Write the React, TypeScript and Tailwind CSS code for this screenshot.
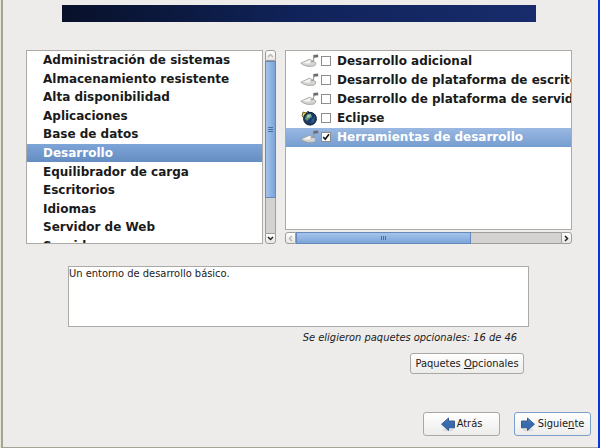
import { useState } from "react";

const categories = [
  "Administración de sistemas",
  "Almacenamiento resistente",
  "Alta disponibilidad",
  "Aplicaciones",
  "Base de datos",
  "Desarrollo",
  "Equilibrador de carga",
  "Escritorios",
  "Idiomas",
  "Servidor de Web",
  "Servidores",
];

const groups = [
  { name: "Desarrollo adicional", icon: "trowel" },
  { name: "Desarrollo de plataforma de escritorio", icon: "trowel" },
  { name: "Desarrollo de plataforma de servidor", icon: "trowel" },
  { name: "Eclipse", icon: "globe" },
  { name: "Herramientas de desarrollo", icon: "trowel" },
];

function Trowel() {
  return (
    <svg width="19" height="14" viewBox="0 0 19 14" className="shrink-0" aria-hidden="true">
      <path d="M0.8 9.2 L9.5 5.2 L15.5 8.5 Q16.5 11.5 13 12.2 L8 12.4 Q3.5 11.8 0.8 9.2Z" fill="#d4d4d2" stroke="#9a9a98" strokeWidth="0.8" />
      <path d="M2.5 9.1 L9.5 6 L13.5 8.6 L8 9.8Z" fill="#f3f3f1" />
      <path d="M10.5 8 Q13.6 8 13.6 5.5 L14 2.5" fill="none" stroke="#9b9b99" strokeWidth="1.2" />
      <path d="M13.4 2.4 L18.2 1.8" stroke="#6d6d6b" strokeWidth="2.8" />
    </svg>
  );
}

function Globe() {
  return (
    <svg width="19" height="16" viewBox="0 0 19 16" className="shrink-0" aria-hidden="true">
      <path d="M2 6 L3 2 L6 3 L8 1 L10 3 L7 6 L4 8Z" fill="#e9ce35" stroke="#4d4820" strokeWidth="0.8" />
      <circle cx="10" cy="8.7" r="6.4" fill="#1b3a68" stroke="#111c2b" />
      <path d="M6 6 Q8 3 11 4 L12 7 L9 9 L7 11 L5 9Z" fill="#5b9476" />
      <path d="M12 9 L15 7 L14 12 L11 13Z" fill="#2d5a86" />
      <path d="M7.5 4.8 L11 4.4 L10 7 L7 8Z" fill="#a5cbc8" />
    </svg>
  );
}

function Arrow({ back = false }: { back?: boolean }) {
  return (
    <svg width="14" height="15" viewBox="0 0 14 15" className={back ? "-scale-x-100" : ""} aria-hidden="true">
      <defs>
        <linearGradient id={back ? "arrow-b" : "arrow-f"} x1="0" y1="0" x2="0" y2="1">
          <stop offset="0" stopColor="#5084c0" />
          <stop offset="0.5" stopColor="#3568ab" />
          <stop offset="1" stopColor="#3a70b4" />
        </linearGradient>
      </defs>
      <ellipse cx="7" cy="13" rx="5.5" ry="1.3" fill="#000" opacity="0.08" />
      <path d="M0.5 4 H6.5 V1 L13.4 7.2 L6.5 13.5 V10.8 H0.5Z" fill={back ? "url(#arrow-b)" : "url(#arrow-f)"} stroke="#285189" strokeWidth="0.9" />
    </svg>
  );
}

function Chevron({ d, color }: { d: string; color: string }) {
  return (
    <svg width="7" height="7" viewBox="0 0 7 7" aria-hidden="true">
      <path d={d} fill="none" stroke={color} strokeWidth="1.5" />
    </svg>
  );
}

const stepper = "flex shrink-0 items-center justify-center border-[#a09e9b] bg-gradient-to-b from-white to-[#e7e6e5]";
const action = "flex items-center justify-center rounded-[3px] border bg-gradient-to-b from-white to-[#ececeb]";

export default function App() {
  const [category, setCategory] = useState("Desarrollo");
  const [selected, setSelected] = useState("Herramientas de desarrollo");
  const [checked, setChecked] = useState(["Herramientas de desarrollo"]);

  const toggle = (name: string) => {
    setSelected(name);
    setChecked((c) => (c.includes(name) ? c.filter((n) => n !== name) : [...c, name]));
  };

  return (
    <div className="flex min-h-screen border-l border-[#e8e6d6] bg-[#edeceb] font-['DejaVu_Sans_Condensed','DejaVu_Sans',sans-serif] text-[11px] leading-[14px] text-[#1a1a1a]">
      <div className="w-[2px] shrink-0 bg-[#a5a597]" />
      <main className="flex min-w-0 flex-1 flex-col border-b border-[#a5a597] pt-[5px]">
        <div className="mr-[62px] ml-[59px] h-[17px] bg-gradient-to-r from-[#08112a] via-[#10235a] to-[#182c6c]" />

        <section className="mt-7 mr-[26px] ml-[23px] flex h-[194px] font-['DejaVu_Sans',sans-serif] text-[12px] font-bold">
          <div className="min-w-0 flex-[235] overflow-hidden border border-[#acaaa7] bg-white">
            <div role="listbox" aria-label="Categorías" className="grid h-[204px] grid-rows-11">
              {categories.map((name) => (
                <button
                  key={name}
                  role="option"
                  aria-selected={name === category}
                  onClick={() => setCategory(name)}
                  className={
                    "flex min-h-0 items-center pl-4 text-left whitespace-nowrap " +
                    (name === category ? "bg-gradient-to-b from-[#7ea5d8] to-[#648dc2] text-white" : "")
                  }
                >
                  {name}
                </button>
              ))}
            </div>
          </div>

          <div className="ml-[2px] flex w-[11px] shrink-0 flex-col">
            <button aria-label="Subir" className={stepper + " h-[11px] rounded-t-[3px] border"}>
              <Chevron d="M1 5 L3.5 2.5 L6 5" color="#bbb9b6" />
            </button>
            <div className="flex flex-1 flex-col border-x border-[#a09e9b] bg-[#d3d2d0]">
              <div className="-mx-px flex h-[137px] flex-col items-center justify-center gap-px border border-[#6788b8] bg-gradient-to-r from-[#a5c4ea] to-[#7ca4da]">
                <span className="h-px w-[5px] bg-[#4c6f9f]" />
                <span className="h-px w-[5px] bg-[#4c6f9f]" />
                <span className="h-px w-[5px] bg-[#4c6f9f]" />
              </div>
            </div>
            <button aria-label="Bajar" className={stepper + " h-[11px] rounded-b-[3px] border"}>
              <Chevron d="M1 2 L3.5 4.5 L6 2" color="#222222" />
            </button>
          </div>

          <div className="ml-[9px] flex min-w-0 flex-[287] flex-col">
            <div className="flex-1 overflow-hidden border border-[#acaaa7] bg-white">
              <div className="grid h-24 grid-rows-5">
                {groups.map(({ name, icon }) => (
                  <label
                    key={name}
                    className={
                      "flex min-h-0 items-center pl-[14px] whitespace-nowrap " +
                      (name === selected ? "bg-gradient-to-b from-[#9ab8e2] to-[#759dd1] text-white" : "")
                    }
                  >
                    {icon === "globe" ? <Globe /> : <Trowel />}
                    <span className="ml-[2px] grid shrink-0">
                      <input
                        type="checkbox"
                        checked={checked.includes(name)}
                        onChange={() => toggle(name)}
                        className="peer col-start-1 row-start-1 size-[10px] appearance-none border border-[#8f8d8a] bg-white"
                      />
                      <svg viewBox="0 0 10 10" className="pointer-events-none invisible col-start-1 row-start-1 size-[10px] peer-checked:visible" aria-hidden="true">
                        <path d="M2.2 5 L4.2 7.3 L8 2.2" fill="none" stroke="#111" strokeWidth="1.6" />
                      </svg>
                    </span>
                    <span className="ml-[6px]">{name}</span>
                  </label>
                ))}
              </div>
            </div>
            <div className="mt-[2px] flex h-3 shrink-0">
              <button aria-label="Desplazar a la izquierda" className={stepper + " w-[11px] rounded-l-[3px] border"}>
                <Chevron d="M5 1 L2.5 3.5 L5 6" color="#bbb9b6" />
              </button>
              <div className="flex flex-1 border-y border-[#a09e9b] bg-[#d3d2d0]">
                <div className="-my-px flex w-[66%] items-center justify-center gap-px border border-[#6788b8] bg-gradient-to-b from-[#a5c4ea] to-[#7ca4da]">
                  <span className="h-1 w-px bg-[#4c6f9f]" />
                  <span className="h-1 w-px bg-[#4c6f9f]" />
                  <span className="h-1 w-px bg-[#4c6f9f]" />
                </div>
              </div>
              <button aria-label="Desplazar a la derecha" className={stepper + " w-[11px] rounded-r-[3px] border"}>
                <Chevron d="M2 1 L4.5 3.5 L2 6" color="#222222" />
              </button>
            </div>
          </div>
        </section>

        <textarea
          readOnly
          aria-label="Descripción"
          value="Un entorno de desarrollo básico."
          className="mt-[22px] mr-[69px] ml-[65px] h-[61px] resize-none border border-[#acaaa7] bg-white outline-none"
        />
        <p className="mt-1 mr-[81px] text-right italic">Se eligieron paquetes opcionales: 16 de 46</p>
        <div className="mt-2 mr-[74px] flex justify-end">
          <button className={action + " h-[21px] w-[114px] border-[#aaa8a5]"}>
            <span>Paquetes <u>O</u>pcionales</span>
          </button>
        </div>

        <footer className="mt-auto mr-[7px] mb-[11px] flex justify-end gap-[14px]">
          <button className={action + " h-6 w-[77px] gap-[2px] border-[#aaa8a5]"}>
            <Arrow back />
            <span>Atrás</span>
          </button>
          <button className={action + " h-6 w-[77px] gap-[3px] border-[#7f9fcb]"}>
            <Arrow />
            <span>Siguie<u>n</u>te</span>
          </button>
        </footer>
      </main>
      <div className="w-[2px] shrink-0 bg-[#0536dc]" />
    </div>
  );
}
